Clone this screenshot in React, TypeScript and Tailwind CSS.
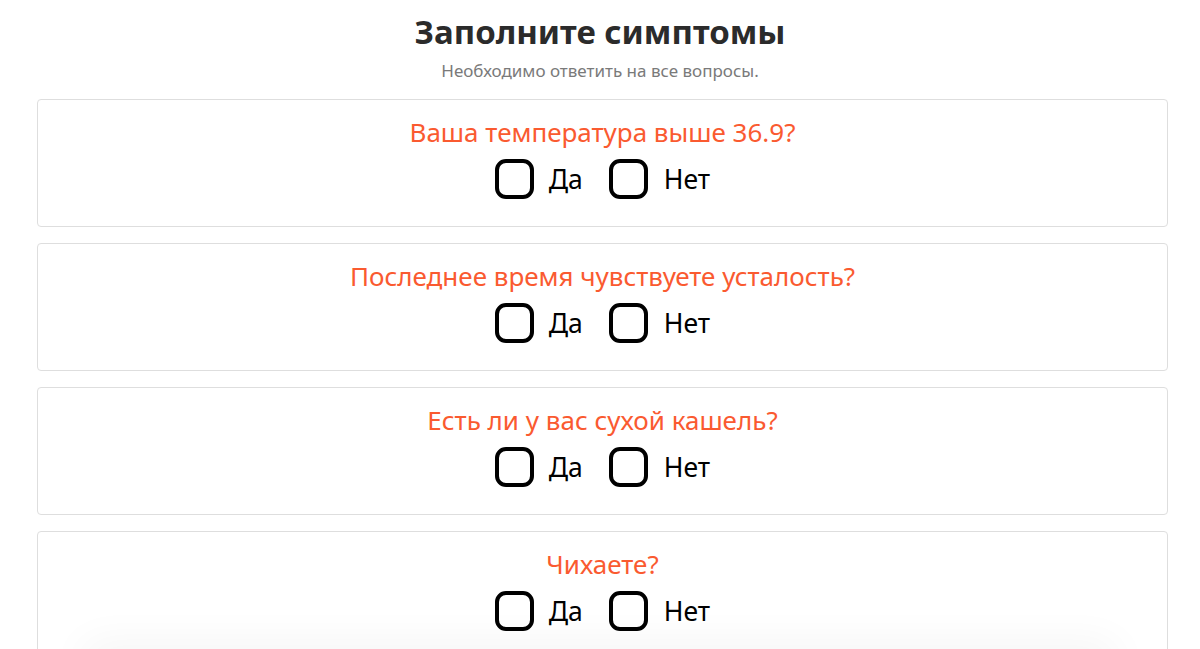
const questions = [
  "Ваша температура выше 36.9?",
  "Последнее время чувствуете усталость?",
  "Есть ли у вас сухой кашель?",
  "Чихаете?",
];

const Box = () => (
  <span className="inline-block h-[40px] w-[39px] rounded-[11px] border-[4px] border-black bg-white" />
);

export default function App() {
  return (
    <div className="relative h-[649px] overflow-hidden bg-white font-['Noto_Sans',sans-serif]">
      <div className="pt-[10px] text-center">
        <h1 className="text-[33px] font-bold leading-[44px] text-[#2b2b2b]">
          Заполните симптомы
        </h1>
        <p className="mt-[6px] text-[17px] leading-[22px] text-[#7a7a7a]">
          Необходимо ответить на все вопросы.
        </p>
      </div>

      <div className="ml-[37px] mr-[32px] mt-[17px] flex flex-col gap-[16px]">
        {questions.map((q) => (
          <div
            key={q}
            className="flex h-[128px] flex-col items-center rounded-[4px] border border-[#dedede] bg-white pt-[15px]"
          >
            <p className="text-[26px] leading-[34px] text-[#fa5a30]">{q}</p>
            <div className="mt-[10px] flex items-center">
              <label className="flex items-center">
                <Box />
                <span className="ml-[15px] text-[26.5px] leading-[34px] text-black">Да</span>
              </label>
              <label className="ml-[26px] flex items-center">
                <Box />
                <span className="ml-[16px] text-[26.5px] leading-[34px] text-black">Нет</span>
              </label>
            </div>
          </div>
        ))}
      </div>

      {/* тень от нижней панели */}
      <div className="pointer-events-none absolute bottom-[-40px] left-[80px] right-[80px] h-[40px] rounded-full shadow-[0_-8px_40px_rgba(0,0,0,0.045)]" />
    </div>
  );
}
